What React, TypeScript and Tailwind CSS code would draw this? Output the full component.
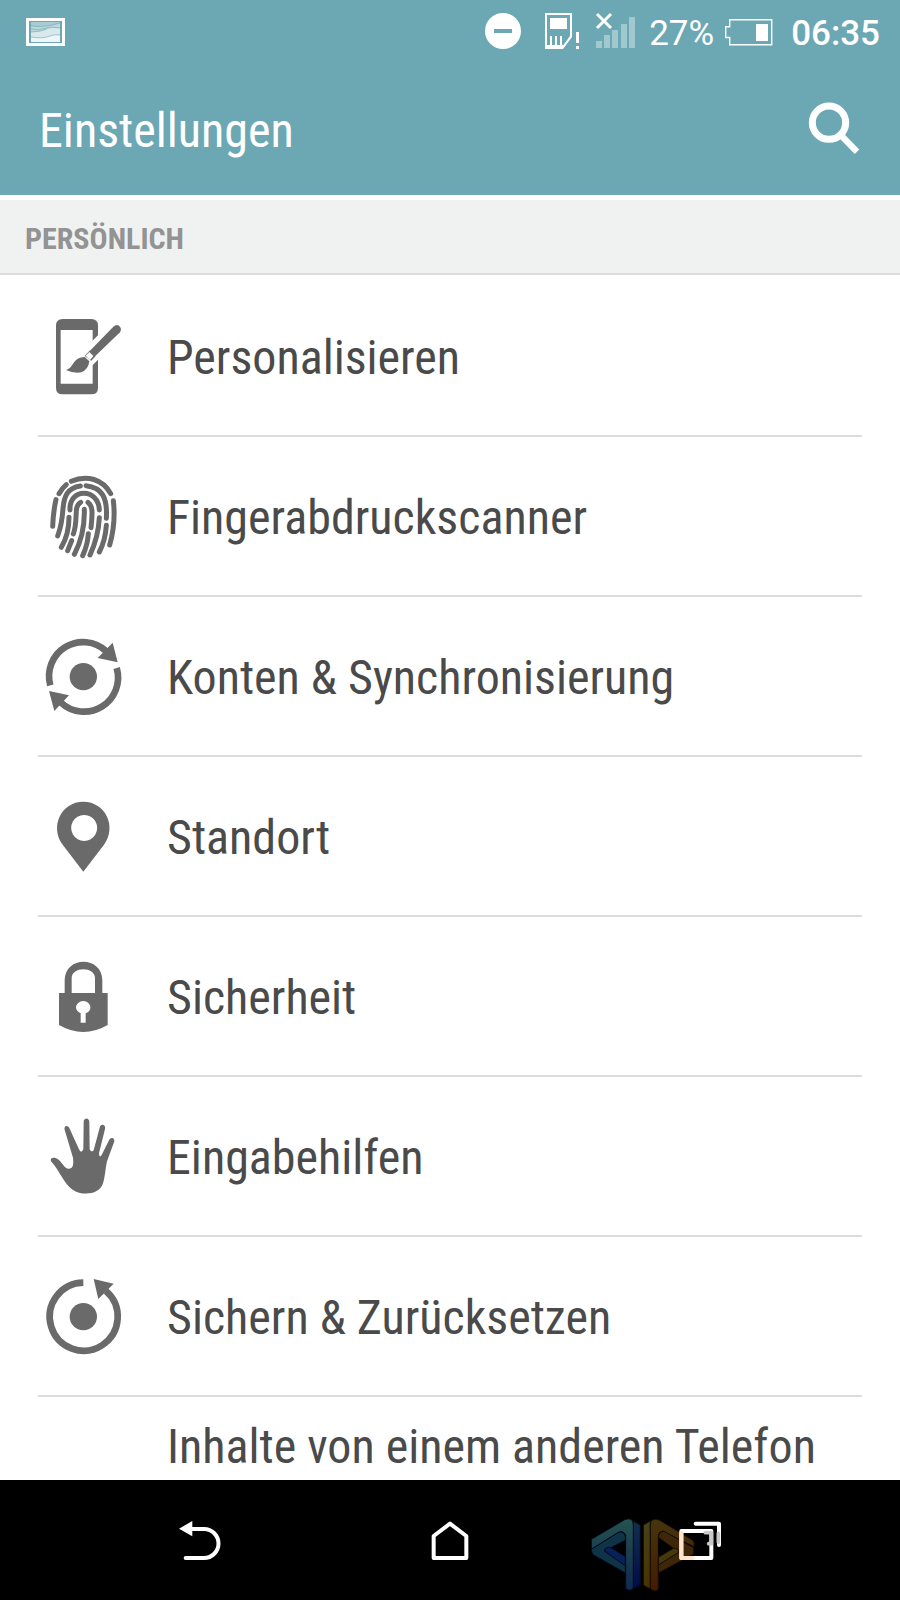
import type { ReactNode } from "react";

const Glyph = ({ children }: { children: ReactNode }) => (
    <svg viewBox="0 0 330 330" className="h-[110px] w-[110px] shrink-0" fill="#6a6a6a" stroke="none" aria-hidden="true">
        {children}
    </svg>
)

const PersonalizeIcon = () => (
    <Glyph>
        <path fillRule="evenodd" d="M98 54h86q20 0 20 20v186q0 20-20 20H98q-20 0-20-20V74q0-20 20-20zM92 87v161h96V87z" />
        <path d="M186 121l18-18v73l-18 18z" fill="#fff" />
        <path d="M180 149l70-72q9-8 17-3 10 8 3 20l-74 71z" />
        <path d="M164 165l16-17 17 17-13 14z" />
        <path d="M167 164l11-11 12 12-10 12z" fill="#fff" />
        <path d="M108 207q14-5 20-17 12-22 36-22l14 13q-3 25-24 33-20 5-46-7z" />
    </Glyph>
)

const FingerprintIcon = () => (
    <Glyph>
        <g fill="none" stroke="#6a6a6a" strokeWidth="15" strokeLinecap="round">
            <path d="M124 61C170 40 219 55 242 98" />
            <path d="M87 98Q96 82 109 71" />
            <path d="M78 116Q70 150 68 196" />
            <path d="M151 75C112 81 102 105 99 143Q96 190 83 225" />
            <path d="M168 74C216 79 233 110 229 172" />
            <path d="M120 147C116 80 206 80 208 147" />
            <path d="M117 169Q117 220 94 259" />
            <path d="M152 124C129 137 146 174 130 219" />
            <path d="M174 124C190 137 187 158 183 200" />
            <path d="M163 145Q165 218 133 280" />
            <path d="M125 239L113 269" />
            <path d="M175 218Q173 252 158 284" />
            <path d="M208 170Q205 228 180 282" />
            <path d="M229 193Q226 238 208 273" />
            <path d="M250 119Q258 185 239 252" />
        </g>
    </Glyph>
)

const SyncIcon = () => (
    <Glyph>
        <circle cx="160" cy="167" r="41" />
        <g fill="none" stroke="#6a6a6a" strokeWidth="20">
            <path d="M61 193A102 102 0 0 1 228 90" />
            <path d="M260 141A102 102 0 0 1 92 244" />
        </g>
        <path d="M248 65l15 59-60-13zM57 210l60 13-44 47z" />
    </Glyph>
)

const PinIcon = () => (
    <Glyph>
        <path fillRule="evenodd" d="M160 272L98 191C58 136 94 62 160 62S262 136 222 191zM162 102a39 39 0 1 0 1 0z" />
    </Glyph>
)

const LockIcon = () => (
    <Glyph>
        <path fillRule="evenodd" d="M87 156h17v-38C104 44 217 44 217 118v38h16v96q-73 42-146 0zM125 156h70v-45c0-35-70-35-70 0zM152 245h15v-28c26-12 12-37-7-37s-34 25-8 37z" />
    </Glyph>
)

const HandIcon = () => (
    <Glyph>
        <path d="M63 181C59 168 73 168 83 174 97 184 104 205 118 203 130 201 131 189 129 170L105 90C99 74 114 70 119 83L147 145Q153 159 160 145L161 64C161 49 178 49 178 64L179 145Q184 156 191 148L209 80C212 65 229 72 225 84L207 157Q208 173 215 162L237 118C243 104 257 113 252 124L231 181C225 210 225 230 219 247 207 284 154 284 128 266 102 249 89 210 65 183z" />
    </Glyph>
)

const BackupIcon = () => (
    <Glyph>
        <circle cx="160" cy="167" r="41" />
        <path d="M160 65A102 102 0 1 0 228 90" fill="none" stroke="#6a6a6a" strokeWidth="20" />
        <path d="M191 54l60 14-46 46z" />
    </Glyph>
)

const items = [
    { label: "Personalisieren", icon: <PersonalizeIcon /> },
    { label: "Fingerabdruckscanner", icon: <FingerprintIcon /> },
    { label: "Konten & Synchronisierung", icon: <SyncIcon /> },
    { label: "Standort", icon: <PinIcon /> },
    { label: "Sicherheit", icon: <LockIcon /> },
    { label: "Eingabehilfen", icon: <HandIcon /> },
    { label: "Sichern & Zurücksetzen", icon: <BackupIcon /> },
]

const StatusBar = () => (
    <div className="flex h-16 items-center justify-between pr-5 pl-[26px]">
        <svg viewBox="0 0 39 28" className="h-7 w-[39px]" aria-hidden="true">
            <path d="M0 0h39v28H0z" fill="#fff" />
            <path d="M3 3h33v22H3z" fill="#6ca7b4" />
            <path d="M5 4h29v20H5z" fill="#a9cbd2" />
            <path d="M5 8q12 2 29-3v19H5z" fill="#bdd8dd" />
            <path d="M5 14q9 0 16-3 6-1 13-1v14H5z" fill="#d9e8eb" />
            <path d="M5 19q12 2 19-1 4-2 10-1v7H5z" fill="#eef5f6" />
            <path d="M5 8q12 2 29-3M5 11q8 2 15-1 6-2 14 0M5 14q9 0 16-3M5 19q12 2 19-1 4-2 10-1" fill="none" stroke="#6ca7b4" strokeWidth=".6" />
        </svg>
        <div className="flex items-center text-white">
            <svg viewBox="0 0 151 40" className="h-10 w-[151px]" fill="#fff" aria-hidden="true">
                <circle cx="18" cy="19" r="18" />
                <path d="M9 17h18v4H9z" fill="#6ca7b4" />
                <path fillRule="evenodd" d="M60 1h27v24L78 37H60zM62 3v32h15l8-11V3z" />
                <path d="M65 6h17v11H65zM65 24h2v11h-2zM70 24h2v11h-2zM75 24h2v11h-2zM62 33h16v2H62z" />
                <path d="M91 20h3v11h-3zM91 34h3v3h-3z" />
                <path d="M111 29h6v7h-6zM119 23h6v13h-6zM127 18h6v18h-6zM136 12h6v24h-6zM144 5h6v31h-6z" fill="#a1c7cf" />
                <path d="M112 2l14 14M126 2l-14 14" stroke="#fff" strokeWidth="3" />
            </svg>
            <span className="ml-[13px] pt-1 text-[35px] leading-10">27%</span>
            <svg viewBox="0 0 48 27" className="ml-[11px] h-[27px] w-12" fill="#fff" aria-hidden="true">
                <path d="M4.700.700h42v25H4.700v-7.200h-4V7.700h4z" fill="none" stroke="#fff" strokeWidth="1.400" />
                <path d="M31 5h12v17H31z" />
            </svg>
            <span className="ml-[18px] pt-1 text-[35px] leading-10 font-medium">06:35</span>
        </div>
    </div>
)

const Watermark = () => (
    <svg viewBox="60 138 321 228" className="pointer-events-none absolute top-9 -left-2.5 h-[76px] w-[107px]" strokeLinejoin="round" aria-hidden="true">
        <defs>
            <linearGradient id="wmBlue" x1="0" y1="0" x2="0" y2="1">
                <stop offset="0" stopColor="#25524f" />
                <stop offset="1" stopColor="#0f2950" />
            </linearGradient>
            <linearGradient id="wmNavy" x1="0" y1="0" x2="0" y2="1">
                <stop offset="0" stopColor="#12304c" />
                <stop offset="1" stopColor="#020c48" />
            </linearGradient>
            <linearGradient id="wmOlive" x1="0" y1="0" x2="0" y2="1">
                <stop offset="0" stopColor="#46431a" />
                <stop offset="1" stopColor="#493300" />
            </linearGradient>
            <linearGradient id="wmBrown" x1="0" y1="0" x2="0" y2="1">
                <stop offset="0" stopColor="#46350d" />
                <stop offset="1" stopColor="#451b02" />
            </linearGradient>
        </defs>
        <g stroke="#030b1c" strokeWidth="3">
            <path d="M190 153l21 12v180l-21 12z" fill="url(#wmNavy)" />
            <path d="M64 238v-30L164 149q25-9 26 14v190q-10 15-23 2V196q-5-14-20-10z" fill="url(#wmBlue)" />
            <path d="M64 238L147 186q15-2 19 13v12L103 243l63 40v26L71 255q-8-7-7-17z" fill="#103447" />
            <path d="M103 243q2-14 20-10l43 27v23l-4 2z" fill="#09215a" />
        </g>
        <g stroke="#180b02" strokeWidth="3">
            <path d="M241 153l-21 12v180l21 12z" fill="url(#wmOlive)" />
            <path d="M241 165q0-24 27-15l99 60q9 8 5 20l-94-46q-13 0-13 18v155q-12 13-24-2z" fill="url(#wmBrown)" />
            <path d="M265 202q2-18 17-18l89 49v19l-106 57v-25l61-38z" fill="#3d2708" />
            <path d="M265 262l45-27q16-1 16 12l-61 38z" fill="#45390b" />
        </g>
        <path d="M130 234l36-22v44zM265 212l36 22-36 22z" fill="#010203" />
    </svg>
)

const BottomNav = () => (
    <nav className="grid h-[120px] shrink-0 grid-cols-[200px_1fr_200px] bg-black px-[100px]">
        <button type="button" aria-label="Zurück" className="flex items-center justify-center">
            <svg viewBox="88 147 129 123" className="h-[41px] w-[43px]" aria-hidden="true">
                <path d="M108 261h55a43 43 0 0 0 0-87H120" fill="none" stroke="#fff" strokeWidth="12" strokeLinecap="round" />
                <path d="M88 173l40-23v46z" fill="#fff" />
            </svg>
        </button>
        <button type="button" aria-label="Startseite" className="flex items-center justify-center">
            <svg viewBox="843 147 114 123" className="h-[41px] w-[38px]" aria-hidden="true">
                <path d="M900 158l49 37v66H851v-66z" fill="none" stroke="#fff" strokeWidth="12" strokeLinejoin="round" />
            </svg>
        </button>
        <div className="relative flex">
            <button type="button" aria-label="Letzte Apps" className="flex grow items-center justify-center">
                <svg viewBox="327 147 129 123" className="relative z-10 h-[41px] w-[43px]" fill="none" stroke="#fff" strokeLinecap="round" strokeLinejoin="round" strokeWidth="12" aria-hidden="true">
                    <path d="M377 158h70v64" />
                    <path d="M334 180h90v81h-90z" />
                    <path d="M334 186v75h34" stroke="#ffe3ca" />
                    <path d="M406 185h18v33h-8M445 187v27" stroke="#c9c9c9" strokeWidth="11" />
                </svg>
            </button>
            <Watermark />
        </div>
    </nav>
)

export default function App() {
    return (
        <div className="flex h-screen flex-col bg-white font-['Roboto_Condensed','Liberation_Sans_Narrow',Roboto,sans-serif]">
            <header className="h-[195px] shrink-0 bg-[#6ca7b4] text-white">
                <div className="font-[Roboto,sans-serif]">
                    <StatusBar />
                </div>
                <div className="flex h-[131px] items-center justify-between pr-10 pl-[39px]">
                    <h1 className="pt-0.5 text-[48px] leading-[60px]">Einstellungen</h1>
                    <button type="button" aria-label="Suchen" className="pb-1">
                        <svg viewBox="1072 303 156 156" className="h-[52px] w-[52px]" fill="none" stroke="#fff" aria-hidden="true">
                            <circle cx="1135" cy="365" r="50" strokeWidth="21" />
                            <path d="M1170 402l49 50" strokeWidth="19" />
                        </svg>
                    </button>
                </div>
            </header>
            <main className="min-h-0 grow overflow-hidden pt-[5px]">
                <h2 className="flex h-[75px] items-center border-b-2 border-[#dcdcdc] bg-[#f0f2f1] pt-1 pl-[25px] text-[30px] font-bold text-[#939393]">PERSÖNLICH</h2>
                <ul className="px-[38px] pt-0.5 text-[48px] leading-[60px] text-[#4a4a4a]">
                    {items.map((item) => (
                        <li key={item.label} className="border-b-2 border-[#dcdcdc]">
                            <a href="#" className="-ml-2 flex h-[158px] items-center">
                                {item.icon}
                                <span className="ml-[27px] pt-1">{item.label}</span>
                            </a>
                        </li>
                    ))}
                    <li>
                        <a href="#" className="flex h-[160px] pt-5 pl-[129px] whitespace-nowrap">Inhalte von einem anderen Telefon</a>
                    </li>
                </ul>
            </main>
            <BottomNav />
        </div>
    )
}
